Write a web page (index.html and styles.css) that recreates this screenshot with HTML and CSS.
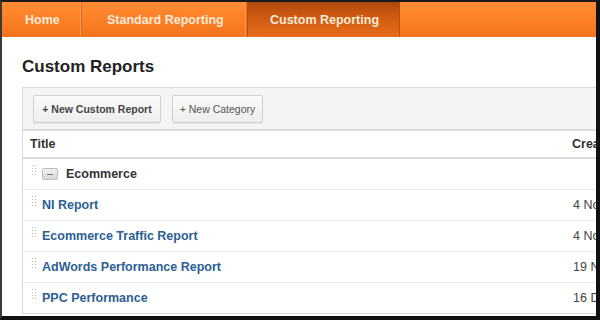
FILE: index.html
```html
<!DOCTYPE html>
<html>
<head>
<meta charset="utf-8">
<link rel="stylesheet" href="styles.css">
</head>
<body>
<div class="frame">
  <nav class="nav">
    <a class="tab tab-home">Home</a>
    <a class="tab tab-std">Standard Reporting</a>
    <a class="tab tab-active">Custom Reporting</a>
  </nav>
  <main class="content">
    <h1 class="title">Custom Reports</h1>
    <section class="panel">
      <div class="toolbar">
        <button class="btn btn-strong">+ New Custom Report</button>
        <button class="btn btn-light">+ New Category</button>
      </div>
      <div class="row head">
        <div class="cell-title">Title</div>
        <div class="cell-date">Created</div>
      </div>
      <div class="row">
        <div class="cell-title"><span class="grip"></span><span class="folder"><span class="minus"></span></span><span class="cat">Ecommerce</span></div>
        <div class="cell-date"></div>
      </div>
      <div class="row">
        <div class="cell-title"><span class="grip"></span><a class="link">NI Report</a></div>
        <div class="cell-date">4 Nov 2011</div>
      </div>
      <div class="row">
        <div class="cell-title"><span class="grip"></span><a class="link">Ecommerce Traffic Report</a></div>
        <div class="cell-date">4 Nov 2011</div>
      </div>
      <div class="row">
        <div class="cell-title"><span class="grip"></span><a class="link">AdWords Performance Report</a></div>
        <div class="cell-date">19 Nov 2011</div>
      </div>
      <div class="row last">
        <div class="cell-title"><span class="grip"></span><a class="link">PPC Performance</a></div>
        <div class="cell-date">16 Dec 2011</div>
      </div>
    </section>
  </main>
</div>
</body>
</html>
```
FILE: styles.css
```css
html, body {
  margin: 0;
  padding: 0;
  background: #ffffff;
}
body {
  font-family: "Liberation Sans", Arial, sans-serif;
}
.frame {
  width: 600px;
  height: 320px;
  box-sizing: border-box;
  border-top: 2px solid #1a1a1a;
  border-left: 2px solid #3a3a3a;
  border-right: 4px solid #111;
  border-bottom: 4px solid #111;
  overflow: hidden;
  display: flex;
  flex-direction: column;
}
.nav {
  height: 35px;
  flex: none;
  display: flex;
  background: linear-gradient(#ff8c33 0%, #fb7f26 55%, #f2731c 100%);
}
.tab {
  display: flex;
  align-items: center;
  height: 100%;
  box-sizing: border-box;
  font-size: 12.5px;
  font-weight: bold;
  color: #fde9d6;
  border-right: 1px solid #e8691a;
  box-shadow: inset -1px 0 0 #ff9b52;
  white-space: nowrap;
}
.tab-home {
  width: 80px;
  padding-left: 23px;
}
.tab-std {
  width: 165px;
  padding-left: 25px;
}
.tab-active {
  width: 153px;
  padding-left: 23px;
  background: linear-gradient(#a9480a 0%, #c85610 30%, #db6416 70%, #e56c1b 100%);
  border-right: 1px solid #b7530f;
  box-shadow: inset 1px 0 0 #c0520e;
}
.content {
  flex: 1;
  padding-left: 20px;
  overflow: hidden;
}
.title {
  margin: 19px 0 9px 0;
  font-size: 17px;
  line-height: 22px;
  font-weight: bold;
  color: #222;
}
.panel {
  width: 640px;
  border: 1px solid #d9d9d9;
  border-right: none;
}
.toolbar {
  height: 41px;
  background: #f4f4f4;
  border-bottom: 2px solid #dcdcdc;
  display: flex;
  align-items: center;
  gap: 11px;
  padding-left: 10px;
}
.btn {
  height: 28px;
  box-sizing: border-box;
  border: 1px solid #d0d0d0;
  border-radius: 2px;
  background: linear-gradient(#fafafa, #eeeeee);
  box-shadow: 0 1px 1px rgba(0,0,0,0.06);
  font-family: "Liberation Sans", Arial, sans-serif;
  font-size: 10.5px;
  color: #444;
  white-space: nowrap;
  padding: 0;
}
.btn-strong {
  font-weight: bold;
  width: 128px;
}
.btn-light {
  width: 91px;
  color: #555;
}
.row {
  display: grid;
  grid-template-columns: 540px 1fr;
  height: 30px;
  align-items: center;
  border-bottom: 1px solid #eaeaea;
  font-size: 12.5px;
}
.row.head {
  height: 26px;
  border-bottom: 2px solid #dcdcdc;
  font-weight: bold;
  color: #333;
}
.row.last {
  border-bottom: none;
}
.head .cell-title {
  padding-left: 7px;
}
.cell-title {
  display: flex;
  align-items: center;
  padding-left: 8px;
  height: 100%;
  white-space: nowrap;
}
.cell-date {
  padding-left: 10px;
  color: #444;
  white-space: nowrap;
}
.head .cell-date {
  padding-left: 9px;
  color: #333;
}
.grip {
  width: 5px;
  height: 11px;
  align-self: flex-start;
  margin-top: 5px;
  margin-right: 6px;
  background-image: radial-gradient(circle, #b8b8b8 0.8px, transparent 1px);
  background-size: 3px 3px;
}
.link {
  color: #2c5f94;
  font-weight: bold;
}
.folder {
  width: 14px;
  height: 10px;
  border: 1px solid #bdbdbd;
  border-radius: 2px;
  background: linear-gradient(#f2f2f2, #d8d8d8);
  display: flex;
  align-items: center;
  justify-content: center;
  margin-right: 8px;
}
.minus {
  width: 6px;
  height: 1px;
  background: #777;
}
.cat {
  font-weight: bold;
  color: #333;
}
```
